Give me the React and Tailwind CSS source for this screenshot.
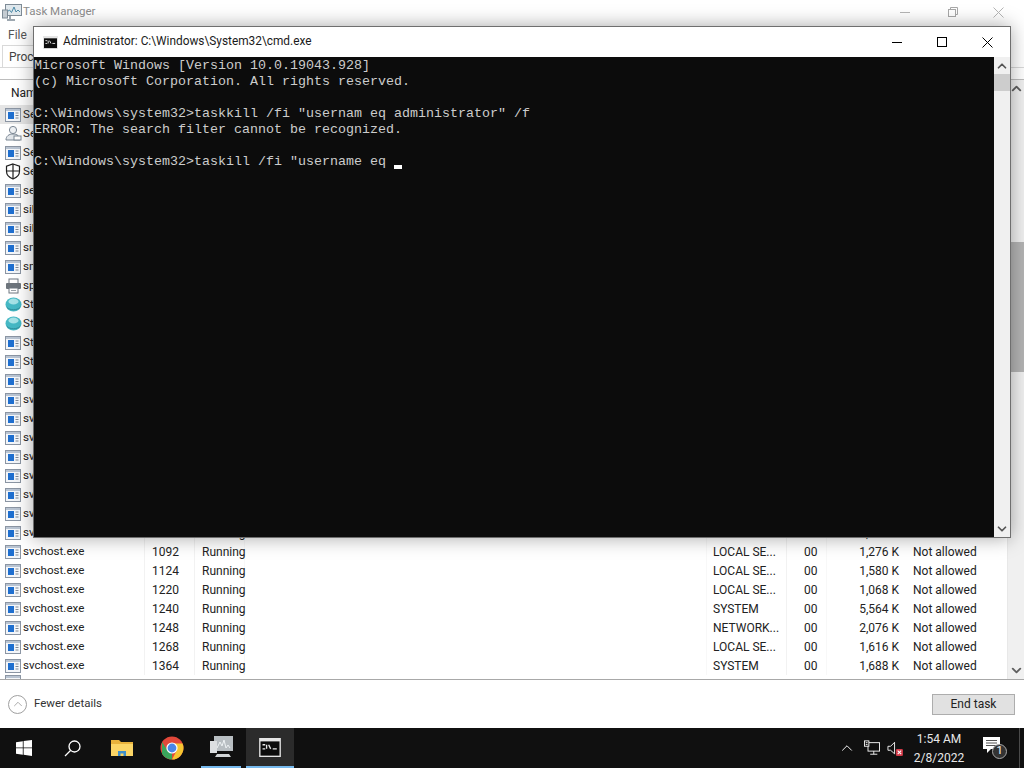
import { ChevronDown, ChevronUp } from 'lucide-react';

const cmdLines = [
  'Microsoft Windows [Version 10.0.19043.928]',
  '(c) Microsoft Corporation. All rights reserved.',
  '',
  'C:\\Windows\\system32>taskkill /fi "usernam eq administrator" /f',
  'ERROR: The search filter cannot be recognized.',
  '',
];

const svc = (pid, user, mem) => ({ name: 'svchost.exe', icon: 'svc', pid, user, mem });

const processes = [
  { name: 'SearchApp.exe', icon: 'svc', pid: 512, user: 'SYSTEM', mem: '2,312 K' },
  { name: 'SecHealth.exe', icon: 'person', pid: 540, user: 'SYSTEM', mem: '3,120 K' },
  { name: 'SearchIndex.exe', icon: 'svc', pid: 612, user: 'SYSTEM', mem: '8,904 K' },
  { name: 'SecurityCenter.exe', icon: 'shield', pid: 640, user: 'SYSTEM', mem: '2,480 K' },
  { name: 'services.exe', icon: 'svc', pid: 668, user: 'SYSTEM', mem: '3,656 K' },
  { name: 'sihost.exe', icon: 'svc', pid: 684, user: 'Administ...', mem: '4,212 K' },
  { name: 'sihost.exe', icon: 'svc', pid: 696, user: 'Administ...', mem: '1,308 K' },
  { name: 'smartscreen.exe', icon: 'svc', pid: 704, user: 'Administ...', mem: '5,720 K' },
  { name: 'smss.exe', icon: 'svc', pid: 332, user: 'SYSTEM', mem: '348 K' },
  { name: 'spoolsv.exe', icon: 'printer', pid: 724, user: 'SYSTEM', mem: '4,816 K' },
  { name: 'StartMenu.exe', icon: 'globe', pid: 736, user: 'Administ...', mem: '9,240 K' },
  { name: 'StartMenu.exe', icon: 'globe', pid: 748, user: 'Administ...', mem: '9,016 K' },
  { name: 'StateRepo.exe', icon: 'svc', pid: 760, user: 'SYSTEM', mem: '1,776 K' },
  { name: 'StorSvc.exe', icon: 'svc', pid: 772, user: 'SYSTEM', mem: '1,420 K' },
  svc(784, 'SYSTEM', '1,024 K'),
  svc(796, 'SYSTEM', '6,812 K'),
  svc(820, 'NETWORK...', '5,340 K'),
  svc(848, 'SYSTEM', '1,512 K'),
  svc(880, 'SYSTEM', '2,104 K'),
  svc(912, 'LOCAL SE...', '1,344 K'),
  svc(948, 'LOCAL SE...', '1,208 K'),
  svc(980, 'LOCAL SE...', '3,432 K'),
  svc(1040, 'SYSTEM', '1,156 K'),
  svc(1092, 'LOCAL SE...', '1,276 K'),
  svc(1124, 'LOCAL SE...', '1,580 K'),
  svc(1220, 'LOCAL SE...', '1,068 K'),
  svc(1240, 'SYSTEM', '5,564 K'),
  svc(1248, 'NETWORK...', '2,076 K'),
  svc(1268, 'LOCAL SE...', '1,616 K'),
  svc(1364, 'SYSTEM', '1,688 K'),
];

const ServiceIcon = () => (
  <svg width="16" height="14" viewBox="0 0 16 14">
    <rect x="0.5" y="0.5" width="15" height="13" fill="#f4f6f9" stroke="#8b95a3" />
    <rect x="1" y="1" width="14" height="2" fill="#b9c4d2" />
    <rect x="3" y="4" width="6" height="7" fill="#1f6fcf" />
    <path d="M10.5 5h3M10.5 7.5h3M10.5 10h3" stroke="#7d8794" />
  </svg>
);

const PersonIcon = () => (
  <svg width="17" height="17" viewBox="0 0 17 17">
    <circle cx="8" cy="5" r="3.6" fill="#eef1f4" stroke="#7b8794" />
    <path d="M1 15c0-4 3-6 7-6s7 2 7 6z" fill="#e2e6ea" stroke="#7b8794" />
    <rect x="9" y="11" width="7" height="4" fill="#fff" stroke="#7b8794" />
  </svg>
);

const ShieldIcon = () => (
  <svg width="16" height="17" viewBox="0 0 16 17" fill="none" stroke="#1f1f1f" strokeWidth="1.2">
    <path d="M8 1l6.5 2.2v5c0 3.8-3 6.4-6.5 7.8-3.5-1.4-6.5-4-6.5-7.8v-5z" fill="#fff" />
    <path d="M8 1v15M1.5 8h13" />
  </svg>
);

const PrinterIcon = () => (
  <svg width="17" height="16" viewBox="0 0 17 16">
    <rect x="4" y="1" width="9" height="5" fill="#fff" stroke="#6f7780" />
    <rect x="1" y="5" width="15" height="6" rx="1" fill="#6d747c" />
    <rect x="4" y="10" width="9" height="5" fill="#fff" stroke="#6f7780" />
    <path d="M6 12.5h5" stroke="#9aa1a8" />
  </svg>
);

const GlobeIcon = () => (
  <svg width="17" height="15" viewBox="0 0 17 15">
    <ellipse cx="8.5" cy="7.5" rx="8" ry="7" fill="#45b8c4" />
    <ellipse cx="8.5" cy="4.5" rx="5" ry="3" fill="#a5e2e6" />
    <path d="M2 10.5c3 3 10 3 13 0" stroke="#2f8d9b" fill="none" />
  </svg>
);

const rowIcons = {
  svc: ServiceIcon,
  person: PersonIcon,
  shield: ShieldIcon,
  printer: PrinterIcon,
  globe: GlobeIcon,
};

const TaskManagerIcon = () => (
  <svg width="20" height="19" viewBox="0 0 20 19">
    <rect x="3.5" y="1.5" width="16" height="11" fill="#dfe7ec" stroke="#7e8b96" />
    <path d="M5 9l2.5-2 2 2.5L12 4l2 5 2-2 2 2" fill="none" stroke="#4b8aa8" />
    <rect x="0.5" y="7" width="5" height="8" fill="#c5ccd2" stroke="#7e8b96" />
    <path d="M8 13v3M5 17h8" stroke="#7e8b96" strokeWidth="1.5" />
  </svg>
);

const CmdIcon = ({ width = 15, height = 13 }) => (
  <svg width={width} height={height} viewBox="0 0 16 14">
    <rect width="16" height="14" fill="#e5e5e5" />
    <rect x="1" y="2.5" width="14" height="10.5" fill="#0c0c0c" />
    <path d="M2.5 5h2M2.5 8h2M5.5 5v3M7 5l1.5 3M10 8h3" stroke="#e8e8e8" />
  </svg>
);

// caption buttons, same drawing for both windows
const MinGlyph = ({ color }) => (
  <svg width="10" height="3" viewBox="0 0 10 3"><path d="M0 1.5h10" stroke={color} /></svg>
);

const MaxGlyph = ({ color }) => (
  <svg width="10" height="10" viewBox="0 0 10 10"><rect x="0.5" y="0.5" width="9" height="9" fill="none" stroke={color} /></svg>
);

const RestoreGlyph = ({ color }) => (
  <svg width="10" height="10" viewBox="0 0 10 10" fill="none" stroke={color}>
    <rect x="0.5" y="2.5" width="7" height="7" />
    <path d="M2.5 2.5v-2h7v7h-2" />
  </svg>
);

const CloseGlyph = ({ color }) => (
  <svg width="11" height="11" viewBox="0 0 11 11"><path d="M0.5 0.5l10 10m0-10l-10 10" stroke={color} /></svg>
);

const WindowsLogo = () => (
  <svg width="16" height="16" viewBox="0 0 16 16" fill="#fff">
    <path d="M0 2.2l6.8-1v6.3H0zM7.6 1.1L16 0v7.5H7.6zM0 8.3h6.8v6.5L0 13.8zM7.6 8.3H16V16l-8.4-1.2z" />
  </svg>
);

const SearchGlyph = () => (
  <svg width="17" height="17" viewBox="0 0 17 17" fill="none" stroke="#fff" strokeWidth="1.3">
    <circle cx="10.5" cy="6.5" r="5.5" />
    <path d="M6.5 10.5L1 16" />
  </svg>
);

const FolderIcon = () => (
  <svg width="22" height="18" viewBox="0 0 22 18">
    <path d="M0 1h8l2 2h12v14H0z" fill="#e8b23c" />
    <rect y="5" width="22" height="12" fill="#fbd566" />
    <path d="M7 17v-5h8v5h-2.5v-2.5h-3V17z" fill="#3f8fc9" />
  </svg>
);

const ChromeIcon = () => (
  <svg width="24" height="24" viewBox="0 0 24 24">
    <circle cx="12" cy="12" r="11.5" fill="#e2483a" />
    <path d="M12 23.5A11.5 11.5 0 0 1 2 17.8L2 6.1 7.6 14.5 12 17z" fill="#3ba55c" />
    <path d="M23.5 12A11.5 11.5 0 0 1 12 23.5L17 14l-5-6.5h10.5A11.5 11.5 0 0 1 23.5 12z" fill="#f6c531" />
    <circle cx="12" cy="12" r="5.6" fill="#fff" />
    <circle cx="12" cy="12" r="4.4" fill="#4a86e8" />
  </svg>
);

const TaskMgrTaskbarIcon = () => (
  <svg width="25" height="24" viewBox="0 0 25 24">
    <rect x="5" y="1" width="19" height="15" fill="#b8bec2" />
    <path d="M8 13l3-6 2 4 2-6 2 8 2-3 2 3" fill="none" stroke="#eef2f4" />
    <rect x="1" y="6" width="7" height="12" fill="#dcdfe1" />
    <path d="M8 19h12l2 3H6z" fill="#d2d5d7" />
  </svg>
);

const NetworkIcon = () => (
  <svg width="16" height="16" viewBox="0 0 18 17" fill="none" stroke="#fff">
    <rect x="4.5" y="2.5" width="13" height="9.5" />
    <path d="M11 12v3.5M7 15.5h8" />
    <rect x="0.5" y="0.5" width="5" height="6" fill="#101010" />
    <path d="M2 2.5h2M2 4.5h2" />
  </svg>
);

const VolumeMutedIcon = () => (
  <svg width="16" height="15" viewBox="0 0 18 17">
    <path d="M1 6h3l4.5-4.5v13L4 10.500H1z" fill="none" stroke="#fff" />
    <rect x="10" y="9" width="8" height="8" rx="1.5" fill="#d13a48" />
    <path d="M12 11l4 4m0-4l-4 4" stroke="#fff" strokeWidth="1.2" />
  </svg>
);

const ProcessRow = ({ process, selected }) => {
  const Icon = rowIcons[process.icon];
  return (
    <div className={`flex h-[19px] shrink-0 items-center ${selected ? 'bg-[#e5e5e5]' : ''}`}>
      <div className="flex h-full w-[145px] shrink-0 items-center border-r border-[#f2f2f2] pl-[5px]">
        <span className="flex w-[18px] shrink-0 items-center">
          <Icon />
        </span>
        <span className="text-[11.6px]">{process.name}</span>
      </div>
      <div className="h-full w-[50px] shrink-0 border-r border-[#f2f2f2] pl-[7px] leading-[20px]">{process.pid}</div>
      <div className="h-full w-[50px] shrink-0 border-r border-[#f8f8f8] pl-[7px] leading-[20px]">Running</div>
      <div className="h-full w-[462px] shrink-0 border-r border-[#f8f8f8]" />
      <div className="h-full w-[80px] shrink-0 border-r border-[#f2f2f2] pl-[6px] leading-[20px]">{process.user}</div>
      <div className="h-full w-[40px] shrink-0 border-r border-[#f8f8f8] pl-[17px] leading-[20px]">00</div>
      <div className="h-full w-[78px] shrink-0 pr-[6px] text-right leading-[20px]">{process.mem}</div>
      <div className="h-full flex-1 pl-[8px] leading-[20px]">Not allowed</div>
    </div>
  );
};

const TaskManager = () => (
  <div className="flex h-[728px] flex-col bg-white text-[12px] text-[#222] font-['Roboto',sans-serif]">
    <div className="flex h-[24px] shrink-0 items-center pl-[2px] text-[#8c8c8c]">
      <TaskManagerIcon />
      <span className="ml-[1px] flex-1 text-[11.5px]">Task Manager</span>
      <span className="mr-[38px]"><MinGlyph color="#b5b5b5" /></span>
      <span className="mr-[35px]"><RestoreGlyph color="#a8a8a8" /></span>
      <span className="mr-[20px]"><CloseGlyph color="#b5b5b5" /></span>
    </div>
    <div className="flex h-[22px] shrink-0 items-center pl-[8px] text-[#555]">File</div>
    <div className="flex h-[22px] shrink-0 items-end border-b border-[#d9d9d9] pl-[2px]">
      <div className="flex h-[22px] w-[60px] items-center border border-b-0 border-[#d9d9d9] pl-[6px] text-[#444]">Processes</div>
    </div>
    <div className="flex h-[12px] shrink-0 border-b border-[#bdbdbd]" />
    <div className="flex min-h-0 flex-1 border-b border-[#a8a8a8]">
      <div className="flex min-w-0 flex-1 flex-col">
        <div className="flex h-[25px] shrink-0 items-center pl-[11px]">Name</div>
        <div className="flex min-h-0 flex-1 flex-col overflow-hidden">
          {processes.map((process, i) => (
            <ProcessRow key={`${process.name}-${process.pid}`} process={process} selected={i === 0} />
          ))}
          {/* next row just peeks out above the border */}
          <div className="min-h-0 flex-1 overflow-hidden pl-[5px]">
            <ServiceIcon />
          </div>
        </div>
      </div>
      <div className="flex w-[17px] shrink-0 flex-col items-center border-l border-[#e8e8e8] bg-[#f0f0f0]">
        <ChevronUp className="mt-[1px] h-[15px] w-[15px] text-[#606060]" strokeWidth={3} />
        <div className="mt-[146px] h-[130px] w-full bg-[#b4b4b4]" />
        <div className="flex-1" />
        <ChevronDown className="mb-[1px] h-[15px] w-[15px] text-[#606060]" strokeWidth={3} />
      </div>
    </div>
    <div className="flex h-[48px] shrink-0 items-center justify-between pl-[8px] pr-[9px]">
      <div className="flex items-center gap-[7px] text-[11.5px] text-[#333]">
        <span className="flex h-[19px] w-[19px] items-center justify-center rounded-full border border-[#a0a0a0]">
          <ChevronUp className="h-[14px] w-[14px] text-[#a0a0a0]" strokeWidth={1.5} />
        </span>
        Fewer details
      </div>
      <div className="flex h-[21px] w-[83px] items-center justify-center border border-[#adadad] bg-[#e1e1e1] text-[#222]">End task</div>
    </div>
  </div>
);

const CmdWindow = () => (
  <div className="absolute left-[33px] top-[26px] flex h-[512px] w-[978px] flex-col border border-[#6f6f6f] bg-white shadow-[0_0_18px_rgba(0,0,0,0.35)]">
    <div className="flex h-[30px] shrink-0 items-center pl-[9px] text-[11.85px] text-[#1a1a1a] font-['Roboto',sans-serif]">
      <CmdIcon />
      <span className="ml-[5px] flex-1">Administrator: C:\Windows\System32\cmd.exe</span>
      <span className="mr-[35px]"><MinGlyph color="#000" /></span>
      <span className="mr-[35px]"><MaxGlyph color="#000" /></span>
      <span className="mr-[17px]"><CloseGlyph color="#000" /></span>
    </div>
    <div className="flex min-h-0 flex-1">
      <div className="flex-1 whitespace-pre bg-[#0c0c0c] pt-[1px] text-[13.33px] leading-[16px] text-[#cccccc] font-['Liberation_Mono',monospace]">
        {cmdLines.map((line, i) => (
          <div key={i} className="h-[16px]">{line}</div>
        ))}
        <div className="flex h-[16px]">
          <span>C:\Windows\system32&gt;taskill /fi "username eq </span>
          <span className="mt-[11px] h-[4px] w-[8px] bg-white" />
        </div>
      </div>
      <div className="flex w-[16px] shrink-0 flex-col items-center bg-[#f0f0f0]">
        <ChevronUp className="mt-[2px] h-[14px] w-[14px] text-[#555]" strokeWidth={3} />
        <div className="mt-[1px] h-[17px] w-full bg-[#cdcdcd]" />
        <div className="flex-1" />
        <ChevronDown className="mb-[1px] h-[14px] w-[14px] text-[#555]" strokeWidth={3} />
      </div>
    </div>
  </div>
);

const Taskbar = () => (
  <div className="flex h-[40px] shrink-0 items-center bg-[#101010] text-[12px] text-[#e8e8e8] font-['Roboto',sans-serif]">
    <div className="flex h-full w-[48px] items-center justify-center"><WindowsLogo /></div>
    <div className="flex h-full w-[48px] items-center justify-center"><SearchGlyph /></div>
    <div className="flex h-full w-[52px] items-center justify-center"><FolderIcon /></div>
    <div className="flex h-full w-[48px] items-center justify-center"><ChromeIcon /></div>
    <div className="mx-[5px] flex h-full w-[40px] items-center justify-center border-b-2 border-[#76b9ed]"><TaskMgrTaskbarIcon /></div>
    <div className="flex h-full w-[48px] items-center justify-center border-b-2 border-[#76b9ed] bg-[#2b2b2b]"><CmdIcon width={22} height={19} /></div>
    <div className="flex-1" />
    <ChevronUp className="h-[18px] w-[18px] text-white" strokeWidth={1.25} />
    <span className="ml-[8px]"><NetworkIcon /></span>
    <span className="ml-[7px]"><VolumeMutedIcon /></span>
    <div className="mt-[1px] flex w-[72px] flex-col items-center leading-[19px]">
      <span>1:54 AM</span>
      <span>2/8/2022</span>
    </div>
    <div className="relative ml-[8px] mr-[12px] h-[22px] w-[24px]">
      <svg width="17" height="16" viewBox="0 0 17 16" className="absolute left-0 top-0">
        <path d="M0 0h17v12H8l-4 4v-4H0z" fill="#fff" />
        <path d="M3 3.5h11M3 6h11M3 8.5h11" stroke="#555" />
      </svg>
      <span className="absolute left-[9px] top-[7px] flex h-[15px] w-[15px] items-center justify-center rounded-full border border-[#aaa] bg-[#333] text-[11px] text-white">1</span>
    </div>
    <div className="mr-[4px] h-full w-[1px] bg-[#4a4a4a]" />
  </div>
);

const App = () => (
  <div className="relative flex h-[768px] w-[1024px] flex-col overflow-hidden">
    <TaskManager />
    <Taskbar />
    <CmdWindow />
  </div>
);

export default App;
